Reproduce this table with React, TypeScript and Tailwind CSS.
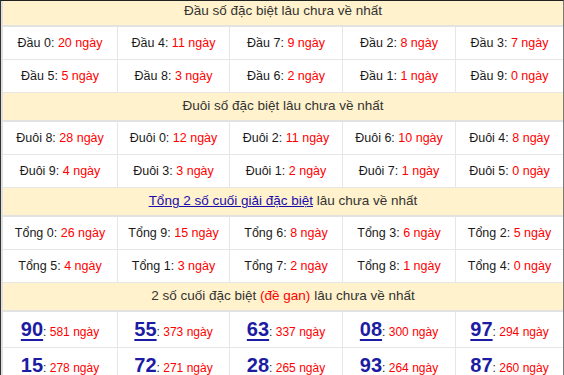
import React from "react";

type Cell = { label: string; value: number };

const block1: Cell[][] = [
  [
    { label: "Đầu 0", value: 20 },
    { label: "Đầu 4", value: 11 },
    { label: "Đầu 7", value: 9 },
    { label: "Đầu 2", value: 8 },
    { label: "Đầu 3", value: 7 },
  ],
  [
    { label: "Đầu 5", value: 5 },
    { label: "Đầu 8", value: 3 },
    { label: "Đầu 6", value: 2 },
    { label: "Đầu 1", value: 1 },
    { label: "Đầu 9", value: 0 },
  ],
];

const block2: Cell[][] = [
  [
    { label: "Đuôi 8", value: 28 },
    { label: "Đuôi 0", value: 12 },
    { label: "Đuôi 2", value: 11 },
    { label: "Đuôi 6", value: 10 },
    { label: "Đuôi 4", value: 8 },
  ],
  [
    { label: "Đuôi 9", value: 4 },
    { label: "Đuôi 3", value: 3 },
    { label: "Đuôi 1", value: 2 },
    { label: "Đuôi 7", value: 1 },
    { label: "Đuôi 5", value: 0 },
  ],
];

const block3: Cell[][] = [
  [
    { label: "Tổng 0", value: 26 },
    { label: "Tổng 9", value: 15 },
    { label: "Tổng 6", value: 8 },
    { label: "Tổng 3", value: 6 },
    { label: "Tổng 2", value: 5 },
  ],
  [
    { label: "Tổng 5", value: 4 },
    { label: "Tổng 1", value: 3 },
    { label: "Tổng 7", value: 2 },
    { label: "Tổng 8", value: 1 },
    { label: "Tổng 4", value: 0 },
  ],
];

const block4: Cell[][] = [
  [
    { label: "90", value: 581 },
    { label: "55", value: 373 },
    { label: "63", value: 337 },
    { label: "08", value: 300 },
    { label: "97", value: 294 },
  ],
  [
    { label: "15", value: 278 },
    { label: "72", value: 271 },
    { label: "28", value: 265 },
    { label: "93", value: 264 },
    { label: "87", value: 260 },
  ],
];

function Header({ children, first }: { children: React.ReactNode; first?: boolean }) {
  return (
    <div
      className={
        "h-[29px] bg-[#fff2cc] border-b-2 border-[#e2e2e2] flex items-center justify-center text-[13.5px] text-[#333333] " +
        (first ? "-mt-[3px]" : "")
      }
    >
      {children}
    </div>
  );
}

function Row({ cells, big }: { cells: Cell[]; big?: boolean }) {
  return (
    <div
      className={
        "grid grid-cols-[115px_112px_113px_113px_1fr] border-b border-[#e6e6e6] " +
        (big ? "h-[36px]" : "h-[33px]")
      }
    >
      {cells.map((c, i) => (
        <div
          key={i}
          className={
            "flex items-center justify-center whitespace-nowrap " +
            (big ? "text-[12px] " : "text-[12.5px] ") +
            (i < 4 ? "border-r border-[#e6e6e6]" : "")
          }
        >
          {big ? (
            <span className="flex items-baseline">
              <span className="text-[20px] font-bold text-[#1c1ca3] underline decoration-2 underline-offset-[3px] leading-none">
                {c.label}
              </span>
              <span className="text-[#222222]">:&nbsp;</span>
              <span className="text-[#ff0000]">{c.value} ngày</span>
            </span>
          ) : (
            <span>
              <span className="text-[#1a1a1a]">{c.label}: </span>
              <span className="text-[#ff0000]">{c.value} ngày</span>
            </span>
          )}
        </div>
      ))}
    </div>
  );
}

export default function App() {
  return (
    <div
      className="w-[564px] h-[375px] overflow-hidden bg-white border-t border-l border-r border-t-[#222222] border-l-[#333333] border-r-[#7a7a7a]"
      style={{ fontFamily: '"Liberation Sans", Arial, sans-serif' }}
    >
      <div className="border-l-2 border-[#e0e0e0]">
        <Header first>Đầu số đặc biệt lâu chưa về nhất</Header>
        {block1.map((r, i) => (
          <Row key={i} cells={r} />
        ))}
        <Header>Đuôi số đặc biệt lâu chưa về nhất</Header>
        {block2.map((r, i) => (
          <Row key={i} cells={r} />
        ))}
        <Header>
          <span>
            <a href="#" className="text-[#1a0dab] underline">
              Tổng 2 số cuối giải đặc biệt
            </a>{" "}
            lâu chưa về nhất
          </span>
        </Header>
        {block3.map((r, i) => (
          <Row key={i} cells={r} />
        ))}
        <Header>
          <span>
            2 số cuối đặc biệt <span className="text-[#ff0000]">(đề gan)</span> lâu chưa về nhất
          </span>
        </Header>
        {block4.map((r, i) => (
          <Row key={i} cells={r} big />
        ))}
      </div>
    </div>
  );
}
